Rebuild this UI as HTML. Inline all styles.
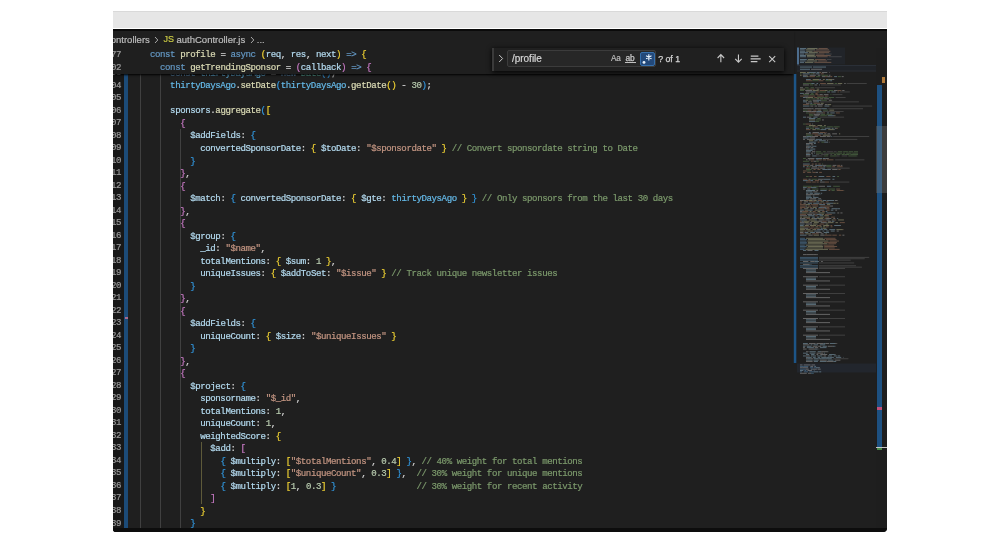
<!DOCTYPE html><html><head><meta charset="utf-8"><style>
*{margin:0;padding:0;box-sizing:border-box}
html,body{width:1000px;height:543px;overflow:hidden;background:#fff}
body{position:relative}
#top{position:absolute;left:113px;top:11px;width:774px;height:17px;background:#e6e6e6;border-top:1px solid #d9d9d9}
#fr{position:absolute;left:113px;top:29px;will-change:transform;width:774px;height:502.5px;background:#1f1f1f;overflow:hidden;border-radius:0 0 4px 3px}
.ln{position:absolute;left:37px;height:12.51px;line-height:12.51px;font-family:"Liberation Mono",monospace;font-size:9.1px;letter-spacing:-0.431px;-webkit-text-stroke:0.2px currentColor;white-space:pre;color:#d4d4d4}
.lnum{position:absolute;margin-top:-0.8px;right:766px;height:12.51px;line-height:12.51px;font-family:"Liberation Mono",monospace;font-size:9.1px;letter-spacing:-0.431px;-webkit-text-stroke:0.2px currentColor;white-space:pre;color:#9a9a9a;text-align:right}
i,b{font-style:normal;font-weight:normal}
.kw{color:#6498c4}.fn{color:#dbdbb5}.var{color:#b4dbf0}.cvar{color:#65bae9}.str{color:#c39582}i.num{color:#b8cbaf}.com{color:#7c9a6c}.op{color:#d4d4d4}.cls{color:#63bfac}
.guide{position:absolute;width:1px;background:#404040}
#bc{position:absolute;left:0;top:0;width:774px;height:19px;font-family:"Liberation Sans",sans-serif;font-size:9.5px;color:#bdbdbd;white-space:pre}
#bc span{position:absolute;top:4.9px;-webkit-text-stroke:0.2px currentColor}
#sticky .lnum{right:673px;margin-top:0.3px}
#sticky{position:absolute;left:0;top:0;width:681px;height:45.2px;background:#1f1f1f;box-shadow:0 2px 2px -1px #000}
#find{position:absolute;left:379.3px;top:18.5px;width:291.6px;height:23.2px;background:#202020;box-shadow:0 1px 5px #000;font-family:"Liberation Sans",sans-serif;color:#cccccc}
#find .sash{position:absolute;left:0;top:0;width:2px;height:100%;background:#3a3a3a}
#find .inp{position:absolute;left:14.8px;top:2.1px;width:148.5px;height:17px;background:#272727;border:1px solid #3c3c3c;border-radius:2px}
#bot{position:absolute;left:0;top:498.6px;width:774px;height:4px;background:#0d0d0d}
#tstrip{position:absolute;left:0;top:0;width:774px;height:2px;background:#0a0a0a}
#sb{position:absolute;left:763px;top:18.5px;width:11px;height:480px}
</style></head><body>
<div id="top"></div>
<div id="fr">
<div style="position:absolute;left:0;top:44px;width:10.5px;height:460px;background:#181818"></div>
<div id="nums"><div class="lnum" style="top:38.94px">103</div>
<div class="lnum" style="top:51.45px">104</div>
<div class="lnum" style="top:63.96px">105</div>
<div class="lnum" style="top:76.47px">106</div>
<div class="lnum" style="top:88.98px">107</div>
<div class="lnum" style="top:101.49px">108</div>
<div class="lnum" style="top:114.00px">109</div>
<div class="lnum" style="top:126.51px">110</div>
<div class="lnum" style="top:139.02px">111</div>
<div class="lnum" style="top:151.53px">112</div>
<div class="lnum" style="top:164.04px">113</div>
<div class="lnum" style="top:176.55px">114</div>
<div class="lnum" style="top:189.06px">115</div>
<div class="lnum" style="top:201.57px">116</div>
<div class="lnum" style="top:214.08px">117</div>
<div class="lnum" style="top:226.59px">118</div>
<div class="lnum" style="top:239.10px">119</div>
<div class="lnum" style="top:251.61px">120</div>
<div class="lnum" style="top:264.12px">121</div>
<div class="lnum" style="top:276.63px">122</div>
<div class="lnum" style="top:289.14px">123</div>
<div class="lnum" style="top:301.65px">124</div>
<div class="lnum" style="top:314.16px">125</div>
<div class="lnum" style="top:326.67px">126</div>
<div class="lnum" style="top:339.18px">127</div>
<div class="lnum" style="top:351.69px">128</div>
<div class="lnum" style="top:364.20px">129</div>
<div class="lnum" style="top:376.71px">130</div>
<div class="lnum" style="top:389.22px">131</div>
<div class="lnum" style="top:401.73px">132</div>
<div class="lnum" style="top:414.24px">133</div>
<div class="lnum" style="top:426.75px">134</div>
<div class="lnum" style="top:439.26px">135</div>
<div class="lnum" style="top:451.77px">136</div>
<div class="lnum" style="top:464.28px">137</div>
<div class="lnum" style="top:476.79px">138</div>
<div class="lnum" style="top:489.30px">139</div>
<div class="lnum" style="top:501.81px">140</div>
</div>
<div class="guide" style="left:27px;top:44px;height:460px"></div>
<div class="guide" style="left:47px;top:44px;height:460px"></div>
<div class="guide" style="left:67.3px;top:99.5px;height:404px"></div>
<div class="guide" style="left:87.5px;top:413px;height:62px;background:#5e5a3a"></div>
<div id="git" style="position:absolute;left:11px;top:44px;width:3.5px;height:460px;background:#1c4b78"></div>
<div style="position:absolute;left:12px;top:287.5px;width:2.5px;height:2px;background:#a86a90"></div>
<div id="code"><div class="ln" style="top:38.94px;opacity:.75">    <i class="kw">const</i> <i class="cvar">thirtyDaysAgo</i> <i class="op">=</i> <i class="kw">new</i> <i class="cls">Date</i><b style="color:#3298e0">(</b><b style="color:#3298e0">)</b><i class="op">;</i></div>
<div class="ln" style="top:51.45px">    <i class="cvar">thirtyDaysAgo</i><i class="op">.</i><i class="fn">setDate</i><b style="color:#3298e0">(</b><i class="cvar">thirtyDaysAgo</i><i class="op">.</i><i class="fn">getDate</i><b style="color:#f2d433">(</b><b style="color:#f2d433">)</b> <i class="op">-</i> <i class="num">30</i><b style="color:#3298e0">)</b><i class="op">;</i></div>
<div class="ln" style="top:63.96px"></div>
<div class="ln" style="top:76.47px">    <i class="var">sponsors</i><i class="op">.</i><i class="fn">aggregate</i><b style="color:#3298e0">(</b><b style="color:#f2d433">[</b></div>
<div class="ln" style="top:88.98px">      <b style="color:#ca7bc7">{</b></div>
<div class="ln" style="top:101.49px">        <i class="var">$addFields</i><i class="op">:</i> <b style="color:#3298e0">{</b></div>
<div class="ln" style="top:114.00px">          <i class="var">convertedSponsorDate</i><i class="op">:</i> <b style="color:#f2d433">{</b> <i class="var">$toDate</i><i class="op">:</i> <i class="str">&quot;$sponsordate&quot;</i> <b style="color:#f2d433">}</b> <i class="com">// Convert sponsordate string to Date</i></div>
<div class="ln" style="top:126.51px">        <b style="color:#3298e0">}</b></div>
<div class="ln" style="top:139.02px">      <b style="color:#ca7bc7">}</b><i class="op">,</i></div>
<div class="ln" style="top:151.53px">      <b style="color:#ca7bc7">{</b></div>
<div class="ln" style="top:164.04px">        <i class="var">$match</i><i class="op">:</i> <b style="color:#3298e0">{</b> <i class="var">convertedSponsorDate</i><i class="op">:</i> <b style="color:#f2d433">{</b> <i class="var">$gte</i><i class="op">:</i> <i class="cvar">thirtyDaysAgo</i> <b style="color:#f2d433">}</b> <b style="color:#3298e0">}</b> <i class="com">// Only sponsors from the last 30 days</i></div>
<div class="ln" style="top:176.55px">      <b style="color:#ca7bc7">}</b><i class="op">,</i></div>
<div class="ln" style="top:189.06px">      <b style="color:#ca7bc7">{</b></div>
<div class="ln" style="top:201.57px">        <i class="var">$group</i><i class="op">:</i> <b style="color:#3298e0">{</b></div>
<div class="ln" style="top:214.08px">          <i class="var">_id</i><i class="op">:</i> <i class="str">&quot;$name&quot;</i><i class="op">,</i></div>
<div class="ln" style="top:226.59px">          <i class="var">totalMentions</i><i class="op">:</i> <b style="color:#f2d433">{</b> <i class="var">$sum</i><i class="op">:</i> <i class="num">1</i> <b style="color:#f2d433">}</b><i class="op">,</i></div>
<div class="ln" style="top:239.10px">          <i class="var">uniqueIssues</i><i class="op">:</i> <b style="color:#f2d433">{</b> <i class="var">$addToSet</i><i class="op">:</i> <i class="str">&quot;$issue&quot;</i> <b style="color:#f2d433">}</b> <i class="com">// Track unique newsletter issues</i></div>
<div class="ln" style="top:251.61px">        <b style="color:#3298e0">}</b></div>
<div class="ln" style="top:264.12px">      <b style="color:#ca7bc7">}</b><i class="op">,</i></div>
<div class="ln" style="top:276.63px">      <b style="color:#ca7bc7">{</b></div>
<div class="ln" style="top:289.14px">        <i class="var">$addFields</i><i class="op">:</i> <b style="color:#3298e0">{</b></div>
<div class="ln" style="top:301.65px">          <i class="var">uniqueCount</i><i class="op">:</i> <b style="color:#f2d433">{</b> <i class="var">$size</i><i class="op">:</i> <i class="str">&quot;$uniqueIssues&quot;</i> <b style="color:#f2d433">}</b></div>
<div class="ln" style="top:314.16px">        <b style="color:#3298e0">}</b></div>
<div class="ln" style="top:326.67px">      <b style="color:#ca7bc7">}</b><i class="op">,</i></div>
<div class="ln" style="top:339.18px">      <b style="color:#ca7bc7">{</b></div>
<div class="ln" style="top:351.69px">        <i class="var">$project</i><i class="op">:</i> <b style="color:#3298e0">{</b></div>
<div class="ln" style="top:364.20px">          <i class="var">sponsorname</i><i class="op">:</i> <i class="str">&quot;$_id&quot;</i><i class="op">,</i></div>
<div class="ln" style="top:376.71px">          <i class="var">totalMentions</i><i class="op">:</i> <i class="num">1</i><i class="op">,</i></div>
<div class="ln" style="top:389.22px">          <i class="var">uniqueCount</i><i class="op">:</i> <i class="num">1</i><i class="op">,</i></div>
<div class="ln" style="top:401.73px">          <i class="var">weightedScore</i><i class="op">:</i> <b style="color:#f2d433">{</b></div>
<div class="ln" style="top:414.24px">            <i class="var">$add</i><i class="op">:</i> <b style="color:#ca7bc7">[</b></div>
<div class="ln" style="top:426.75px">              <b style="color:#3298e0">{</b> <i class="var">$multiply</i><i class="op">:</i> <b style="color:#f2d433">[</b><i class="str">&quot;$totalMentions&quot;</i><i class="op">,</i> <i class="num">0.4</i><b style="color:#f2d433">]</b> <b style="color:#3298e0">}</b><i class="op">,</i> <i class="com">// 40% weight for total mentions</i></div>
<div class="ln" style="top:439.26px">              <b style="color:#3298e0">{</b> <i class="var">$multiply</i><i class="op">:</i> <b style="color:#f2d433">[</b><i class="str">&quot;$uniqueCount&quot;</i><i class="op">,</i> <i class="num">0.3</i><b style="color:#f2d433">]</b> <b style="color:#3298e0">}</b><i class="op">,</i>  <i class="com">// 30% weight for unique mentions</i></div>
<div class="ln" style="top:451.77px">              <b style="color:#3298e0">{</b> <i class="var">$multiply</i><i class="op">:</i> <b style="color:#f2d433">[</b><i class="num">1</i><i class="op">,</i> <i class="num">0.3</i><b style="color:#f2d433">]</b> <b style="color:#3298e0">}</b>                <i class="com">// 30% weight for recent activity</i></div>
<div class="ln" style="top:464.28px">            <b style="color:#ca7bc7">]</b></div>
<div class="ln" style="top:476.79px">          <b style="color:#f2d433">}</b></div>
<div class="ln" style="top:489.30px">        <b style="color:#3298e0">}</b></div>
<div class="ln" style="top:501.81px">      <b style="color:#ca7bc7">}</b><i class="op">,</i></div>
</div>
<svg id="mm" width="90" height="330" style="position:absolute;left:680.0px;top:17.0px"><g><rect x="4.0" y="1.5" width="48" height="17" fill="#212429"/><rect x="4.0" y="19.0" width="81" height="1" fill="#2a2f37"/><rect x="4.0" y="20.0" width="81" height="4.5" fill="#202328"/><rect x="4.0" y="24.5" width="81" height="1" fill="#2a2f37"/><rect x="4.0" y="317.5" width="79" height="9" fill="#22262d"/><rect x="0.8" y="28.0" width="2.5" height="289" fill="#1d5587"/><rect x="4.0" y="1.5" width="2" height="17" fill="#4d6d8d"/></g><g opacity="0.45"><rect x="7.0" y="2.0" width="6.2" height="0.9" fill="#a8d4ee"/><rect x="14.2" y="2.0" width="10.3" height="0.9" fill="#d6d6a0"/><rect x="25.5" y="2.0" width="9.2" height="0.9" fill="#c8906e"/><rect x="7.0" y="3.4" width="4.7" height="0.9" fill="#a8d4ee"/><rect x="12.7" y="3.4" width="9.3" height="0.9" fill="#d6d6a0"/><rect x="23.1" y="3.4" width="13.0" height="0.9" fill="#c8906e"/><rect x="7.0" y="4.8" width="5.2" height="0.9" fill="#a8d4ee"/><rect x="13.2" y="4.8" width="6.3" height="0.9" fill="#d6d6a0"/><rect x="20.5" y="4.8" width="16.9" height="0.9" fill="#c8906e"/><rect x="7.0" y="6.2" width="7.9" height="0.9" fill="#a8d4ee"/><rect x="15.9" y="6.2" width="8.9" height="0.9" fill="#d6d6a0"/><rect x="25.8" y="6.2" width="10.4" height="0.9" fill="#c8906e"/><rect x="7.0" y="7.6" width="4.1" height="0.9" fill="#a8d4ee"/><rect x="12.1" y="7.6" width="10.1" height="0.9" fill="#d6d6a0"/><rect x="23.2" y="7.6" width="8.3" height="0.9" fill="#c8906e"/><rect x="32.5" y="7.6" width="6.2" height="0.9" fill="#707070"/><rect x="7.0" y="9.0" width="5.9" height="0.9" fill="#a8d4ee"/><rect x="13.9" y="9.0" width="7.8" height="0.9" fill="#d6d6a0"/><rect x="22.6" y="9.0" width="15.1" height="0.9" fill="#c8906e"/><rect x="7.0" y="10.3" width="6.0" height="0.9" fill="#a8d4ee"/><rect x="14.0" y="10.3" width="9.0" height="0.9" fill="#d6d6a0"/><rect x="24.0" y="10.3" width="10.7" height="0.9" fill="#c8906e"/><rect x="35.7" y="10.3" width="13.0" height="0.9" fill="#707070"/><rect x="7.0" y="13.1" width="6.8" height="0.9" fill="#a8d4ee"/><rect x="14.8" y="13.1" width="6.1" height="0.9" fill="#d6d6a0"/><rect x="21.9" y="13.1" width="10.9" height="0.9" fill="#c8906e"/><rect x="33.8" y="13.1" width="4.6" height="0.9" fill="#707070"/><rect x="7.0" y="14.5" width="5.6" height="0.9" fill="#a8d4ee"/><rect x="13.6" y="14.5" width="10.5" height="0.9" fill="#d6d6a0"/><rect x="25.1" y="14.5" width="9.0" height="0.9" fill="#c8906e"/><rect x="7.0" y="15.9" width="4.0" height="0.9" fill="#a8d4ee"/><rect x="12.0" y="15.9" width="8.3" height="0.9" fill="#d6d6a0"/><rect x="21.3" y="15.9" width="17.0" height="0.9" fill="#c8906e"/><rect x="7.0" y="26.0" width="5.8" height="0.9" fill="#d6d6a0"/><rect x="14.0" y="26.0" width="2.0" height="0.9" fill="#d6d6a0"/><rect x="16.0" y="26.0" width="6.8" height="0.9" fill="#a8d4ee"/><rect x="23.6" y="26.0" width="2.9" height="0.9" fill="#a8d4ee"/><rect x="26.4" y="26.0" width="1.8" height="0.9" fill="#c8906e"/><rect x="29.0" y="26.0" width="5.3" height="0.9" fill="#c8c8c8"/><rect x="36.3" y="26.0" width="0.5" height="0.9" fill="#c8c8c8"/><rect x="7.0" y="27.4" width="1.5" height="0.9" fill="#70a060"/><rect x="9.7" y="27.4" width="7.0" height="0.9" fill="#a8d4ee"/><rect x="17.5" y="27.4" width="2.5" height="0.9" fill="#70a060"/><rect x="20.0" y="27.4" width="1.7" height="0.9" fill="#c8c8c8"/><rect x="22.6" y="27.4" width="3.9" height="0.9" fill="#a8d4ee"/><rect x="27.7" y="27.4" width="3.1" height="0.9" fill="#c8906e"/><rect x="7.0" y="28.8" width="1.6" height="0.9" fill="#d6d6a0"/><rect x="9.8" y="28.8" width="4.9" height="0.9" fill="#c8c8c8"/><rect x="16.7" y="28.8" width="6.1" height="0.9" fill="#c8c8c8"/><rect x="24.8" y="28.8" width="2.5" height="0.9" fill="#c8c8c8"/><rect x="28.5" y="28.8" width="6.5" height="0.9" fill="#70a060"/><rect x="35.8" y="28.8" width="1.6" height="0.9" fill="#c8c8c8"/><rect x="10.0" y="30.2" width="3.8" height="0.9" fill="#a8d4ee"/><rect x="13.8" y="30.2" width="1.7" height="0.9" fill="#d6d6a0"/><rect x="16.3" y="30.2" width="5.6" height="0.9" fill="#c8906e"/><rect x="23.1" y="30.2" width="3.8" height="0.9" fill="#70a060"/><rect x="28.9" y="30.2" width="3.1" height="0.9" fill="#c8c8c8"/><rect x="32.0" y="30.2" width="2.2" height="0.9" fill="#c8906e"/><rect x="34.2" y="30.2" width="3.0" height="0.9" fill="#c8c8c8"/><rect x="37.3" y="30.2" width="1.9" height="0.9" fill="#c8906e"/><rect x="41.1" y="30.2" width="2.9" height="0.9" fill="#a8d4ee"/><rect x="44.8" y="30.2" width="3.1" height="0.9" fill="#70a060"/><rect x="48.7" y="30.2" width="2.0" height="0.9" fill="#c8c8c8"/><rect x="13.0" y="33.0" width="4.7" height="0.9" fill="#a8d4ee"/><rect x="19.7" y="33.0" width="6.5" height="0.9" fill="#d6d6a0"/><rect x="26.3" y="33.0" width="1.6" height="0.9" fill="#a8d4ee"/><rect x="29.9" y="33.0" width="1.9" height="0.9" fill="#d6d6a0"/><rect x="32.9" y="33.0" width="2.3" height="0.9" fill="#a8d4ee"/><rect x="35.2" y="33.0" width="4.0" height="0.9" fill="#d6d6a0"/><rect x="39.2" y="33.0" width="2.1" height="0.9" fill="#c8c8c8"/><rect x="13.0" y="34.3" width="6.3" height="0.9" fill="#c8906e"/><rect x="19.3" y="34.3" width="6.2" height="0.9" fill="#70a060"/><rect x="25.5" y="34.3" width="4.9" height="0.9" fill="#c8906e"/><rect x="32.5" y="34.3" width="4.7" height="0.9" fill="#70a060"/><rect x="37.2" y="34.3" width="1.9" height="0.9" fill="#a8d4ee"/><rect x="10.0" y="37.1" width="3.9" height="0.9" fill="#70a060"/><rect x="13.9" y="37.1" width="4.4" height="0.9" fill="#70a060"/><rect x="18.3" y="37.1" width="3.2" height="0.9" fill="#a8d4ee"/><rect x="23.5" y="37.1" width="1.6" height="0.9" fill="#a8d4ee"/><rect x="27.1" y="37.1" width="5.8" height="0.9" fill="#c8906e"/><rect x="34.1" y="37.1" width="6.4" height="0.9" fill="#d6d6a0"/><rect x="41.7" y="37.1" width="2.3" height="0.9" fill="#70a060"/><rect x="44.8" y="37.1" width="4.4" height="0.9" fill="#d6d6a0"/><rect x="51.2" y="37.1" width="1.5" height="0.9" fill="#c8c8c8"/><rect x="53.7" y="37.1" width="20.0" height="0.9" fill="#707070"/><rect x="10.0" y="38.5" width="5.9" height="0.9" fill="#c8c8c8"/><rect x="16.7" y="38.5" width="3.6" height="0.9" fill="#70a060"/><rect x="21.5" y="38.5" width="2.7" height="0.9" fill="#c8c8c8"/><rect x="26.2" y="38.5" width="0.8" height="0.9" fill="#a8d4ee"/><rect x="27.9" y="38.5" width="20.0" height="0.9" fill="#707070"/><rect x="7.0" y="41.3" width="3.0" height="0.9" fill="#c8c8c8"/><rect x="12.0" y="41.3" width="3.6" height="0.9" fill="#70a060"/><rect x="17.6" y="41.3" width="3.3" height="0.9" fill="#70a060"/><rect x="21.9" y="41.3" width="20.0" height="0.9" fill="#707070"/><rect x="7.0" y="42.7" width="5.2" height="0.9" fill="#d6d6a0"/><rect x="13.4" y="42.7" width="3.2" height="0.9" fill="#70a060"/><rect x="16.6" y="42.7" width="5.0" height="0.9" fill="#c8906e"/><rect x="23.7" y="42.7" width="2.5" height="0.9" fill="#d6d6a0"/><rect x="7.0" y="44.1" width="4.0" height="0.9" fill="#70a060"/><rect x="12.2" y="44.1" width="6.8" height="0.9" fill="#c8c8c8"/><rect x="19.7" y="44.1" width="6.0" height="0.9" fill="#d6d6a0"/><rect x="26.6" y="44.1" width="5.4" height="0.9" fill="#c8906e"/><rect x="32.0" y="44.1" width="2.5" height="0.9" fill="#d6d6a0"/><rect x="35.7" y="44.1" width="4.5" height="0.9" fill="#70a060"/><rect x="40.9" y="44.1" width="3.7" height="0.9" fill="#c8c8c8"/><rect x="44.6" y="44.1" width="3.8" height="0.9" fill="#c8906e"/><rect x="49.2" y="44.1" width="2.3" height="0.9" fill="#c8c8c8"/><rect x="13.0" y="45.5" width="4.1" height="0.9" fill="#c8c8c8"/><rect x="17.1" y="45.5" width="5.5" height="0.9" fill="#a8d4ee"/><rect x="23.3" y="45.5" width="2.8" height="0.9" fill="#c8906e"/><rect x="26.2" y="45.5" width="6.9" height="0.9" fill="#70a060"/><rect x="34.2" y="45.5" width="2.9" height="0.9" fill="#a8d4ee"/><rect x="38.4" y="45.5" width="4.3" height="0.9" fill="#a8d4ee"/><rect x="44.6" y="45.5" width="1.2" height="0.9" fill="#c8906e"/><rect x="46.8" y="45.5" width="10.0" height="0.9" fill="#707070"/><rect x="7.0" y="46.9" width="3.9" height="0.9" fill="#a8d4ee"/><rect x="11.7" y="46.9" width="4.4" height="0.9" fill="#c8c8c8"/><rect x="18.1" y="46.9" width="2.3" height="0.9" fill="#70a060"/><rect x="22.4" y="46.9" width="2.2" height="0.9" fill="#c8906e"/><rect x="10.0" y="48.2" width="6.1" height="0.9" fill="#70a060"/><rect x="16.9" y="48.2" width="4.4" height="0.9" fill="#70a060"/><rect x="22.4" y="48.2" width="3.2" height="0.9" fill="#c8906e"/><rect x="26.5" y="48.2" width="3.2" height="0.9" fill="#c8c8c8"/><rect x="30.8" y="48.2" width="4.7" height="0.9" fill="#c8c8c8"/><rect x="37.5" y="48.2" width="0.9" height="0.9" fill="#70a060"/><rect x="39.4" y="48.2" width="10.0" height="0.9" fill="#707070"/><rect x="7.0" y="49.6" width="4.3" height="0.9" fill="#c8906e"/><rect x="11.3" y="49.6" width="4.2" height="0.9" fill="#c8c8c8"/><rect x="15.5" y="49.6" width="6.6" height="0.9" fill="#c8906e"/><rect x="24.2" y="49.6" width="6.6" height="0.9" fill="#c8906e"/><rect x="31.9" y="49.6" width="2.9" height="0.9" fill="#c8906e"/><rect x="35.6" y="49.6" width="0.3" height="0.9" fill="#c8906e"/><rect x="10.0" y="51.0" width="2.2" height="0.9" fill="#a8d4ee"/><rect x="12.2" y="51.0" width="2.6" height="0.9" fill="#c8c8c8"/><rect x="14.8" y="51.0" width="5.3" height="0.9" fill="#d6d6a0"/><rect x="21.3" y="51.0" width="2.8" height="0.9" fill="#c8906e"/><rect x="24.1" y="51.0" width="4.2" height="0.9" fill="#70a060"/><rect x="28.4" y="51.0" width="6.2" height="0.9" fill="#70a060"/><rect x="35.7" y="51.0" width="5.4" height="0.9" fill="#70a060"/><rect x="42.6" y="51.0" width="10.0" height="0.9" fill="#707070"/><rect x="13.0" y="52.4" width="4.5" height="0.9" fill="#70a060"/><rect x="18.3" y="52.4" width="4.4" height="0.9" fill="#70a060"/><rect x="23.5" y="52.4" width="2.8" height="0.9" fill="#d6d6a0"/><rect x="27.1" y="52.4" width="3.2" height="0.9" fill="#d6d6a0"/><rect x="31.1" y="52.4" width="2.7" height="0.9" fill="#c8c8c8"/><rect x="33.8" y="52.4" width="2.2" height="0.9" fill="#c8c8c8"/><rect x="36.8" y="52.4" width="0.6" height="0.9" fill="#d6d6a0"/><rect x="10.0" y="53.8" width="2.6" height="0.9" fill="#a8d4ee"/><rect x="12.6" y="53.8" width="2.6" height="0.9" fill="#d6d6a0"/><rect x="16.4" y="53.8" width="2.1" height="0.9" fill="#70a060"/><rect x="19.7" y="53.8" width="4.3" height="0.9" fill="#c8c8c8"/><rect x="24.0" y="53.8" width="4.2" height="0.9" fill="#a8d4ee"/><rect x="28.2" y="53.8" width="5.7" height="0.9" fill="#70a060"/><rect x="35.9" y="53.8" width="2.3" height="0.9" fill="#c8c8c8"/><rect x="38.2" y="53.8" width="0.9" height="0.9" fill="#c8c8c8"/><rect x="7.0" y="20.6" width="12.0" height="0.9" fill="#a8d4ee"/><rect x="20.0" y="20.6" width="13.0" height="0.9" fill="#a8d4ee"/><rect x="7.0" y="22.8" width="10.0" height="0.9" fill="#a8d4ee"/><rect x="18.0" y="22.8" width="11.0" height="0.9" fill="#c8c8c8"/><rect x="10.0" y="55.4" width="4.0" height="0.9" fill="#a8d4ee"/><rect x="15.2" y="55.4" width="3.6" height="0.9" fill="#c8c8c8"/><rect x="20.1" y="55.4" width="3.9" height="0.9" fill="#c8c8c8"/><rect x="24.0" y="55.4" width="2.0" height="0.9" fill="#a8d4ee"/><rect x="26.9" y="55.4" width="39.0" height="0.9" fill="#707070"/><rect x="13.0" y="56.8" width="3.5" height="0.9" fill="#c8c8c8"/><rect x="17.3" y="56.8" width="2.0" height="0.9" fill="#a8d4ee"/><rect x="20.6" y="56.8" width="6.4" height="0.9" fill="#c8906e"/><rect x="27.8" y="56.8" width="2.9" height="0.9" fill="#d6d6a0"/><rect x="10.0" y="58.2" width="5.8" height="0.9" fill="#c8906e"/><rect x="16.6" y="58.2" width="6.4" height="0.9" fill="#70a060"/><rect x="24.2" y="58.2" width="5.7" height="0.9" fill="#c8c8c8"/><rect x="31.9" y="58.2" width="2.6" height="0.9" fill="#c8c8c8"/><rect x="34.6" y="58.2" width="3.5" height="0.9" fill="#d6d6a0"/><rect x="10.0" y="59.6" width="6.5" height="0.9" fill="#a8d4ee"/><rect x="17.3" y="59.6" width="3.0" height="0.9" fill="#c8c8c8"/><rect x="21.5" y="59.6" width="2.7" height="0.9" fill="#c8c8c8"/><rect x="25.0" y="59.6" width="4.4" height="0.9" fill="#c8c8c8"/><rect x="31.4" y="59.6" width="5.0" height="0.9" fill="#a8d4ee"/><rect x="39.3" y="59.6" width="39.8" height="0.9" fill="#707070"/><rect x="10.0" y="62.3" width="2.9" height="0.9" fill="#c8c8c8"/><rect x="12.9" y="62.3" width="5.7" height="0.9" fill="#c8c8c8"/><rect x="18.6" y="62.3" width="2.0" height="0.9" fill="#c8c8c8"/><rect x="21.8" y="62.3" width="6.5" height="0.9" fill="#c8c8c8"/><rect x="28.3" y="62.3" width="5.0" height="0.9" fill="#a8d4ee"/><rect x="33.3" y="62.3" width="0.9" height="0.9" fill="#a8d4ee"/><rect x="35.2" y="62.3" width="34.8" height="0.9" fill="#707070"/><rect x="10.0" y="63.7" width="4.5" height="0.9" fill="#70a060"/><rect x="14.5" y="63.7" width="3.9" height="0.9" fill="#c8906e"/><rect x="20.3" y="63.7" width="3.1" height="0.9" fill="#c8906e"/><rect x="24.6" y="63.7" width="3.5" height="0.9" fill="#d6d6a0"/><rect x="30.1" y="63.7" width="5.1" height="0.9" fill="#70a060"/><rect x="36.4" y="63.7" width="4.7" height="0.9" fill="#d6d6a0"/><rect x="10.0" y="65.1" width="2.4" height="0.9" fill="#c8c8c8"/><rect x="12.4" y="65.1" width="6.4" height="0.9" fill="#c8c8c8"/><rect x="18.8" y="65.1" width="4.7" height="0.9" fill="#c8c8c8"/><rect x="23.5" y="65.1" width="5.2" height="0.9" fill="#a8d4ee"/><rect x="29.7" y="65.1" width="20.9" height="0.9" fill="#707070"/><rect x="13.0" y="66.5" width="2.8" height="0.9" fill="#70a060"/><rect x="15.8" y="66.5" width="6.7" height="0.9" fill="#c8906e"/><rect x="23.3" y="66.5" width="6.9" height="0.9" fill="#c8c8c8"/><rect x="30.2" y="66.5" width="1.8" height="0.9" fill="#c8906e"/><rect x="34.0" y="66.5" width="2.1" height="0.9" fill="#a8d4ee"/><rect x="37.3" y="66.5" width="4.4" height="0.9" fill="#a8d4ee"/><rect x="42.9" y="66.5" width="3.9" height="0.9" fill="#c8906e"/><rect x="16.0" y="67.9" width="3.8" height="0.9" fill="#70a060"/><rect x="20.6" y="67.9" width="6.7" height="0.9" fill="#c8c8c8"/><rect x="28.1" y="67.9" width="4.1" height="0.9" fill="#70a060"/><rect x="33.5" y="67.9" width="5.8" height="0.9" fill="#70a060"/><rect x="16.0" y="69.3" width="4.6" height="0.9" fill="#70a060"/><rect x="21.4" y="69.3" width="5.0" height="0.9" fill="#c8c8c8"/><rect x="27.2" y="69.3" width="6.7" height="0.9" fill="#70a060"/><rect x="34.7" y="69.3" width="6.3" height="0.9" fill="#a8d4ee"/><rect x="41.1" y="69.3" width="1.4" height="0.9" fill="#d6d6a0"/><rect x="10.0" y="70.7" width="3.0" height="0.9" fill="#a8d4ee"/><rect x="13.8" y="70.7" width="4.5" height="0.9" fill="#c8c8c8"/><rect x="20.4" y="70.7" width="4.1" height="0.9" fill="#a8d4ee"/><rect x="26.6" y="70.7" width="24.5" height="0.9" fill="#707070"/><rect x="16.0" y="72.1" width="6.3" height="0.9" fill="#a8d4ee"/><rect x="24.3" y="72.1" width="3.3" height="0.9" fill="#70a060"/><rect x="16.0" y="73.5" width="6.0" height="0.9" fill="#d6d6a0"/><rect x="22.8" y="73.5" width="5.1" height="0.9" fill="#70a060"/><rect x="29.0" y="73.5" width="1.9" height="0.9" fill="#c8c8c8"/><rect x="16.0" y="74.9" width="6.3" height="0.9" fill="#a8d4ee"/><rect x="22.3" y="74.9" width="3.9" height="0.9" fill="#70a060"/><rect x="10.0" y="77.6" width="2.7" height="0.9" fill="#70a060"/><rect x="12.7" y="77.6" width="5.3" height="0.9" fill="#c8906e"/><rect x="19.2" y="77.6" width="0.9" height="0.9" fill="#c8c8c8"/><rect x="16.0" y="79.0" width="6.5" height="0.9" fill="#d6d6a0"/><rect x="24.5" y="79.0" width="4.6" height="0.9" fill="#d6d6a0"/><rect x="31.1" y="79.0" width="1.7" height="0.9" fill="#d6d6a0"/><rect x="13.0" y="80.4" width="5.5" height="0.9" fill="#70a060"/><rect x="19.3" y="80.4" width="2.0" height="0.9" fill="#d6d6a0"/><rect x="21.3" y="80.4" width="3.5" height="0.9" fill="#c8906e"/><rect x="26.8" y="80.4" width="5.9" height="0.9" fill="#70a060"/><rect x="33.9" y="80.4" width="5.9" height="0.9" fill="#70a060"/><rect x="40.5" y="80.4" width="6.1" height="0.9" fill="#70a060"/><rect x="13.0" y="81.8" width="3.0" height="0.9" fill="#a8d4ee"/><rect x="16.8" y="81.8" width="4.3" height="0.9" fill="#70a060"/><rect x="22.0" y="81.8" width="4.6" height="0.9" fill="#a8d4ee"/><rect x="28.6" y="81.8" width="1.9" height="0.9" fill="#70a060"/><rect x="31.7" y="81.8" width="5.8" height="0.9" fill="#a8d4ee"/><rect x="38.7" y="81.8" width="1.9" height="0.9" fill="#a8d4ee"/><rect x="41.8" y="81.8" width="2.0" height="0.9" fill="#c8c8c8"/><rect x="43.8" y="81.8" width="1.0" height="0.9" fill="#c8906e"/><rect x="13.0" y="83.2" width="4.4" height="0.9" fill="#c8906e"/><rect x="19.4" y="83.2" width="3.4" height="0.9" fill="#d6d6a0"/><rect x="23.6" y="83.2" width="4.2" height="0.9" fill="#70a060"/><rect x="27.8" y="83.2" width="5.4" height="0.9" fill="#a8d4ee"/><rect x="35.2" y="83.2" width="5.7" height="0.9" fill="#d6d6a0"/><rect x="40.9" y="83.2" width="0.8" height="0.9" fill="#a8d4ee"/><rect x="16.0" y="86.0" width="1.6" height="0.9" fill="#a8d4ee"/><rect x="19.6" y="86.0" width="6.6" height="0.9" fill="#c8c8c8"/><rect x="26.9" y="86.0" width="5.6" height="0.9" fill="#c8906e"/><rect x="33.3" y="86.0" width="0.5" height="0.9" fill="#c8906e"/><rect x="13.0" y="87.4" width="1.8" height="0.9" fill="#d6d6a0"/><rect x="14.8" y="87.4" width="3.2" height="0.9" fill="#c8c8c8"/><rect x="18.8" y="87.4" width="6.5" height="0.9" fill="#c8906e"/><rect x="25.3" y="87.4" width="4.7" height="0.9" fill="#a8d4ee"/><rect x="31.2" y="87.4" width="2.1" height="0.9" fill="#c8c8c8"/><rect x="34.5" y="87.4" width="2.7" height="0.9" fill="#c8c8c8"/><rect x="39.2" y="87.4" width="4.8" height="0.9" fill="#c8c8c8"/><rect x="46.0" y="87.4" width="1.2" height="0.9" fill="#d6d6a0"/><rect x="13.0" y="88.7" width="6.7" height="0.9" fill="#70a060"/><rect x="21.7" y="88.7" width="6.2" height="0.9" fill="#c8906e"/><rect x="29.9" y="88.7" width="6.5" height="0.9" fill="#d6d6a0"/><rect x="36.4" y="88.7" width="1.5" height="0.9" fill="#c8c8c8"/><rect x="10.0" y="90.1" width="3.6" height="0.9" fill="#c8c8c8"/><rect x="13.6" y="90.1" width="5.1" height="0.9" fill="#a8d4ee"/><rect x="18.7" y="90.1" width="6.3" height="0.9" fill="#c8c8c8"/><rect x="27.0" y="90.1" width="5.9" height="0.9" fill="#c8c8c8"/><rect x="33.7" y="90.1" width="3.8" height="0.9" fill="#c8c8c8"/><rect x="38.3" y="90.1" width="0.9" height="0.9" fill="#a8d4ee"/><rect x="40.2" y="90.1" width="36.0" height="0.9" fill="#707070"/><rect x="10.0" y="91.5" width="5.7" height="0.9" fill="#a8d4ee"/><rect x="16.5" y="91.5" width="5.5" height="0.9" fill="#c8c8c8"/><rect x="10.0" y="92.9" width="2.0" height="0.9" fill="#c8c8c8"/><rect x="14.0" y="92.9" width="2.0" height="0.9" fill="#c8c8c8"/><rect x="16.0" y="92.9" width="5.8" height="0.9" fill="#c8c8c8"/><rect x="22.6" y="92.9" width="6.4" height="0.9" fill="#a8d4ee"/><rect x="30.0" y="92.9" width="34.3" height="0.9" fill="#707070"/><rect x="16.0" y="94.3" width="4.2" height="0.9" fill="#d6d6a0"/><rect x="21.4" y="94.3" width="3.2" height="0.9" fill="#a8d4ee"/><rect x="25.8" y="94.3" width="7.0" height="0.9" fill="#a8d4ee"/><rect x="34.0" y="94.3" width="1.1" height="0.9" fill="#c8c8c8"/><rect x="16.0" y="95.7" width="6.8" height="0.9" fill="#a8d4ee"/><rect x="24.8" y="95.7" width="1.6" height="0.9" fill="#c8906e"/><rect x="28.4" y="95.7" width="2.8" height="0.9" fill="#70a060"/><rect x="31.2" y="95.7" width="4.0" height="0.9" fill="#a8d4ee"/><rect x="36.0" y="95.7" width="0.5" height="0.9" fill="#c8c8c8"/><rect x="13.0" y="97.0" width="6.7" height="0.9" fill="#c8c8c8"/><rect x="20.9" y="97.0" width="1.9" height="0.9" fill="#a8d4ee"/><rect x="13.0" y="98.4" width="3.6" height="0.9" fill="#a8d4ee"/><rect x="17.8" y="98.4" width="2.4" height="0.9" fill="#c8c8c8"/><rect x="13.0" y="99.8" width="3.3" height="0.9" fill="#c8c8c8"/><rect x="16.3" y="99.8" width="2.1" height="0.9" fill="#a8d4ee"/><rect x="19.2" y="99.8" width="4.2" height="0.9" fill="#a8d4ee"/><rect x="13.0" y="101.2" width="1.7" height="0.9" fill="#c8c8c8"/><rect x="14.7" y="101.2" width="2.1" height="0.9" fill="#a8d4ee"/><rect x="17.6" y="101.2" width="2.6" height="0.9" fill="#c8c8c8"/><rect x="13.0" y="102.6" width="3.4" height="0.9" fill="#c8c8c8"/><rect x="17.2" y="102.6" width="5.1" height="0.9" fill="#a8d4ee"/><rect x="13.0" y="103.9" width="6.6" height="0.9" fill="#a8d4ee"/><rect x="21.6" y="103.9" width="0.3" height="0.9" fill="#c8c8c8"/><rect x="13.0" y="105.3" width="4.8" height="0.9" fill="#a8d4ee"/><rect x="19.0" y="105.3" width="3.3" height="0.9" fill="#c8c8c8"/><rect x="23.0" y="105.3" width="5.1" height="0.9" fill="#70a060"/><rect x="30.1" y="105.3" width="2.6" height="0.9" fill="#70a060"/><rect x="33.9" y="105.3" width="6.0" height="0.9" fill="#707070"/><rect x="40.7" y="105.3" width="2.9" height="0.9" fill="#707070"/><rect x="44.8" y="105.3" width="4.5" height="0.9" fill="#70a060"/><rect x="50.2" y="105.3" width="4.7" height="0.9" fill="#70a060"/><rect x="55.6" y="105.3" width="4.6" height="0.9" fill="#70a060"/><rect x="61.0" y="105.3" width="4.0" height="0.9" fill="#70a060"/><rect x="13.0" y="106.7" width="3.8" height="0.9" fill="#c8c8c8"/><rect x="18.0" y="106.7" width="2.0" height="0.9" fill="#c8c8c8"/><rect x="21.2" y="106.7" width="0.7" height="0.9" fill="#a8d4ee"/><rect x="23.0" y="106.7" width="6.9" height="0.9" fill="#70a060"/><rect x="30.7" y="106.7" width="6.5" height="0.9" fill="#707070"/><rect x="37.1" y="106.7" width="4.6" height="0.9" fill="#70a060"/><rect x="42.5" y="106.7" width="6.5" height="0.9" fill="#70a060"/><rect x="49.8" y="106.7" width="2.2" height="0.9" fill="#70a060"/><rect x="53.2" y="106.7" width="5.3" height="0.9" fill="#70a060"/><rect x="59.3" y="106.7" width="5.7" height="0.9" fill="#70a060"/><rect x="13.0" y="108.1" width="4.5" height="0.9" fill="#a8d4ee"/><rect x="19.5" y="108.1" width="0.6" height="0.9" fill="#a8d4ee"/><rect x="23.0" y="108.1" width="3.2" height="0.9" fill="#707070"/><rect x="28.2" y="108.1" width="4.9" height="0.9" fill="#707070"/><rect x="33.1" y="108.1" width="2.4" height="0.9" fill="#70a060"/><rect x="37.4" y="108.1" width="1.7" height="0.9" fill="#707070"/><rect x="41.1" y="108.1" width="2.2" height="0.9" fill="#70a060"/><rect x="44.1" y="108.1" width="3.3" height="0.9" fill="#70a060"/><rect x="48.6" y="108.1" width="2.8" height="0.9" fill="#70a060"/><rect x="51.5" y="108.1" width="5.0" height="0.9" fill="#70a060"/><rect x="57.3" y="108.1" width="3.7" height="0.9" fill="#70a060"/><rect x="61.0" y="108.1" width="4.0" height="0.9" fill="#70a060"/><rect x="13.0" y="109.5" width="4.2" height="0.9" fill="#c8c8c8"/><rect x="19.2" y="109.5" width="4.3" height="0.9" fill="#a8d4ee"/><rect x="23.0" y="109.5" width="6.5" height="0.9" fill="#707070"/><rect x="30.7" y="109.5" width="4.4" height="0.9" fill="#70a060"/><rect x="37.1" y="109.5" width="6.5" height="0.9" fill="#70a060"/><rect x="43.5" y="109.5" width="3.1" height="0.9" fill="#707070"/><rect x="48.7" y="109.5" width="5.5" height="0.9" fill="#707070"/><rect x="55.4" y="109.5" width="5.6" height="0.9" fill="#70a060"/><rect x="61.0" y="109.5" width="2.8" height="0.9" fill="#70a060"/><rect x="64.7" y="109.5" width="0.3" height="0.9" fill="#70a060"/><rect x="10.0" y="112.0" width="2.8" height="0.9" fill="#70a060"/><rect x="14.8" y="112.0" width="6.7" height="0.9" fill="#c8c8c8"/><rect x="22.7" y="112.0" width="6.3" height="0.9" fill="#a8d4ee"/><rect x="29.8" y="112.0" width="2.7" height="0.9" fill="#a8d4ee"/><rect x="32.5" y="112.0" width="3.3" height="0.9" fill="#c8c8c8"/><rect x="13.0" y="113.4" width="1.5" height="0.9" fill="#c8c8c8"/><rect x="15.7" y="113.4" width="1.6" height="0.9" fill="#c8c8c8"/><rect x="17.3" y="113.4" width="3.9" height="0.9" fill="#c8906e"/><rect x="23.3" y="113.4" width="2.3" height="0.9" fill="#c8c8c8"/><rect x="25.5" y="113.4" width="3.2" height="0.9" fill="#c8906e"/><rect x="29.9" y="113.4" width="3.2" height="0.9" fill="#c8906e"/><rect x="33.9" y="113.4" width="6.6" height="0.9" fill="#c8906e"/><rect x="42.1" y="113.4" width="29.3" height="0.9" fill="#707070"/><rect x="10.0" y="114.8" width="6.1" height="0.9" fill="#70a060"/><rect x="18.1" y="114.8" width="1.6" height="0.9" fill="#c8906e"/><rect x="20.5" y="114.8" width="2.6" height="0.9" fill="#c8c8c8"/><rect x="23.1" y="114.8" width="2.8" height="0.9" fill="#70a060"/><rect x="10.0" y="117.6" width="6.8" height="0.9" fill="#a8d4ee"/><rect x="18.8" y="117.6" width="1.9" height="0.9" fill="#c8906e"/><rect x="21.9" y="117.6" width="2.2" height="0.9" fill="#c8906e"/><rect x="25.3" y="117.6" width="2.5" height="0.9" fill="#c8906e"/><rect x="29.0" y="117.6" width="1.1" height="0.9" fill="#70a060"/><rect x="10.0" y="118.9" width="6.4" height="0.9" fill="#c8906e"/><rect x="17.2" y="118.9" width="3.0" height="0.9" fill="#c8c8c8"/><rect x="22.2" y="118.9" width="6.9" height="0.9" fill="#a8d4ee"/><rect x="29.2" y="118.9" width="4.4" height="0.9" fill="#c8c8c8"/><rect x="33.6" y="118.9" width="4.8" height="0.9" fill="#70a060"/><rect x="39.6" y="118.9" width="3.8" height="0.9" fill="#c8c8c8"/><rect x="44.2" y="118.9" width="3.1" height="0.9" fill="#c8906e"/><rect x="48.1" y="118.9" width="1.2" height="0.9" fill="#c8c8c8"/><rect x="10.0" y="120.3" width="1.7" height="0.9" fill="#a8d4ee"/><rect x="13.7" y="120.3" width="1.5" height="0.9" fill="#a8d4ee"/><rect x="15.2" y="120.3" width="2.5" height="0.9" fill="#70a060"/><rect x="18.9" y="120.3" width="5.1" height="0.9" fill="#c8c8c8"/><rect x="25.2" y="120.3" width="4.3" height="0.9" fill="#c8906e"/><rect x="30.3" y="120.3" width="2.1" height="0.9" fill="#a8d4ee"/><rect x="33.2" y="120.3" width="5.2" height="0.9" fill="#70a060"/><rect x="39.2" y="120.3" width="2.9" height="0.9" fill="#c8906e"/><rect x="44.1" y="120.3" width="2.9" height="0.9" fill="#c8906e"/><rect x="47.0" y="120.3" width="2.6" height="0.9" fill="#c8906e"/><rect x="13.0" y="121.7" width="3.9" height="0.9" fill="#c8906e"/><rect x="18.1" y="121.7" width="6.2" height="0.9" fill="#c8c8c8"/><rect x="24.3" y="121.7" width="2.1" height="0.9" fill="#c8c8c8"/><rect x="27.2" y="121.7" width="4.9" height="0.9" fill="#c8c8c8"/><rect x="34.3" y="121.7" width="22.4" height="0.9" fill="#707070"/><rect x="13.0" y="123.1" width="5.6" height="0.9" fill="#70a060"/><rect x="20.6" y="123.1" width="2.0" height="0.9" fill="#c8906e"/><rect x="24.5" y="123.1" width="2.9" height="0.9" fill="#c8906e"/><rect x="29.4" y="123.1" width="5.3" height="0.9" fill="#a8d4ee"/><rect x="34.7" y="123.1" width="3.2" height="0.9" fill="#a8d4ee"/><rect x="39.2" y="123.1" width="5.3" height="0.9" fill="#c8c8c8"/><rect x="45.3" y="123.1" width="2.3" height="0.9" fill="#c8906e"/><rect x="10.0" y="124.5" width="3.8" height="0.9" fill="#c8906e"/><rect x="13.8" y="124.5" width="3.7" height="0.9" fill="#70a060"/><rect x="19.4" y="124.5" width="0.7" height="0.9" fill="#c8c8c8"/><rect x="10.0" y="125.9" width="2.2" height="0.9" fill="#c8906e"/><rect x="14.2" y="125.9" width="4.0" height="0.9" fill="#c8906e"/><rect x="19.4" y="125.9" width="3.2" height="0.9" fill="#c8906e"/><rect x="22.6" y="125.9" width="2.4" height="0.9" fill="#c8c8c8"/><rect x="26.2" y="125.9" width="2.7" height="0.9" fill="#c8906e"/><rect x="13.0" y="130.1" width="2.7" height="0.9" fill="#70a060"/><rect x="16.5" y="130.1" width="2.5" height="0.9" fill="#c8906e"/><rect x="21.0" y="130.1" width="2.6" height="0.9" fill="#c8906e"/><rect x="25.6" y="130.1" width="5.7" height="0.9" fill="#a8d4ee"/><rect x="33.3" y="130.1" width="4.2" height="0.9" fill="#c8906e"/><rect x="39.5" y="130.1" width="2.6" height="0.9" fill="#a8d4ee"/><rect x="44.1" y="130.1" width="1.9" height="0.9" fill="#70a060"/><rect x="10.0" y="132.8" width="4.3" height="0.9" fill="#c8906e"/><rect x="15.5" y="132.8" width="2.1" height="0.9" fill="#c8c8c8"/><rect x="18.4" y="132.8" width="5.5" height="0.9" fill="#70a060"/><rect x="24.7" y="132.8" width="5.7" height="0.9" fill="#c8c8c8"/><rect x="30.4" y="132.8" width="7.0" height="0.9" fill="#a8d4ee"/><rect x="39.4" y="132.8" width="2.0" height="0.9" fill="#a8d4ee"/><rect x="10.0" y="134.2" width="4.8" height="0.9" fill="#a8d4ee"/><rect x="14.8" y="134.2" width="2.5" height="0.9" fill="#c8906e"/><rect x="17.4" y="134.2" width="2.6" height="0.9" fill="#a8d4ee"/><rect x="22.0" y="134.2" width="4.1" height="0.9" fill="#c8906e"/><rect x="27.4" y="134.2" width="1.7" height="0.9" fill="#a8d4ee"/><rect x="13.0" y="135.6" width="5.4" height="0.9" fill="#c8906e"/><rect x="19.2" y="135.6" width="3.6" height="0.9" fill="#c8906e"/><rect x="23.6" y="135.6" width="2.1" height="0.9" fill="#c8906e"/><rect x="26.9" y="135.6" width="4.9" height="0.9" fill="#c8c8c8"/><rect x="31.8" y="135.6" width="4.3" height="0.9" fill="#c8906e"/><rect x="37.1" y="135.6" width="19.2" height="0.9" fill="#707070"/><rect x="10.0" y="139.8" width="2.7" height="0.9" fill="#70a060"/><rect x="12.7" y="139.8" width="6.8" height="0.9" fill="#70a060"/><rect x="20.2" y="139.8" width="5.8" height="0.9" fill="#70a060"/><rect x="26.1" y="139.8" width="5.9" height="0.9" fill="#c8c8c8"/><rect x="33.9" y="139.8" width="4.2" height="0.9" fill="#a8d4ee"/><rect x="40.2" y="139.8" width="6.6" height="0.9" fill="#70a060"/><rect x="10.0" y="141.2" width="3.7" height="0.9" fill="#a8d4ee"/><rect x="14.5" y="141.2" width="3.4" height="0.9" fill="#c8906e"/><rect x="17.9" y="141.2" width="5.6" height="0.9" fill="#a8d4ee"/><rect x="24.3" y="141.2" width="0.4" height="0.9" fill="#70a060"/><rect x="10.0" y="142.6" width="2.2" height="0.9" fill="#c8c8c8"/><rect x="14.2" y="142.6" width="3.0" height="0.9" fill="#a8d4ee"/><rect x="19.2" y="142.6" width="6.2" height="0.9" fill="#70a060"/><rect x="27.3" y="142.6" width="5.5" height="0.9" fill="#70a060"/><rect x="32.8" y="142.6" width="1.6" height="0.9" fill="#70a060"/><rect x="35.6" y="142.6" width="6.4" height="0.9" fill="#70a060"/><rect x="43.2" y="142.6" width="3.9" height="0.9" fill="#c8906e"/><rect x="13.0" y="144.0" width="3.5" height="0.9" fill="#c8906e"/><rect x="16.5" y="144.0" width="5.0" height="0.9" fill="#a8d4ee"/><rect x="23.4" y="144.0" width="1.8" height="0.9" fill="#c8c8c8"/><rect x="27.3" y="144.0" width="6.3" height="0.9" fill="#a8d4ee"/><rect x="35.6" y="144.0" width="1.7" height="0.9" fill="#c8906e"/><rect x="38.5" y="144.0" width="3.2" height="0.9" fill="#70a060"/><rect x="43.7" y="144.0" width="6.9" height="0.9" fill="#c8906e"/><rect x="51.4" y="144.0" width="0.2" height="0.9" fill="#70a060"/><rect x="13.0" y="144.0" width="1.5" height="0.9" fill="#a8d4ee"/><rect x="14.5" y="144.0" width="2.8" height="0.9" fill="#a8d4ee"/><rect x="17.3" y="144.0" width="4.9" height="0.9" fill="#a8d4ee"/><rect x="13.0" y="145.4" width="6.4" height="0.9" fill="#a8d4ee"/><rect x="20.2" y="145.4" width="4.3" height="0.9" fill="#c8c8c8"/><rect x="13.0" y="146.8" width="2.4" height="0.9" fill="#a8d4ee"/><rect x="16.6" y="146.8" width="3.5" height="0.9" fill="#a8d4ee"/><rect x="21.3" y="146.8" width="5.6" height="0.9" fill="#a8d4ee"/><rect x="27.7" y="146.8" width="1.5" height="0.9" fill="#a8d4ee"/><rect x="13.0" y="148.2" width="6.5" height="0.9" fill="#c8c8c8"/><rect x="19.5" y="148.2" width="6.9" height="0.9" fill="#c8c8c8"/><rect x="27.7" y="148.2" width="0.4" height="0.9" fill="#a8d4ee"/><rect x="13.0" y="149.6" width="4.9" height="0.9" fill="#a8d4ee"/><rect x="19.9" y="149.6" width="1.5" height="0.9" fill="#a8d4ee"/><rect x="13.0" y="150.9" width="5.9" height="0.9" fill="#a8d4ee"/><rect x="20.1" y="150.9" width="5.4" height="0.9" fill="#a8d4ee"/><rect x="13.0" y="152.3" width="3.3" height="0.9" fill="#a8d4ee"/><rect x="17.1" y="152.3" width="6.1" height="0.9" fill="#c8c8c8"/><rect x="25.2" y="152.3" width="2.9" height="0.9" fill="#c8c8c8"/><rect x="13.0" y="153.7" width="2.2" height="0.9" fill="#a8d4ee"/><rect x="16.4" y="153.7" width="2.8" height="0.9" fill="#c8c8c8"/><rect x="19.2" y="153.7" width="4.1" height="0.9" fill="#c8c8c8"/><rect x="24.5" y="153.7" width="4.6" height="0.9" fill="#a8d4ee"/><rect x="7.0" y="154.0" width="3.7" height="0.9" fill="#c8c8c8"/><rect x="10.7" y="154.0" width="2.4" height="0.9" fill="#d6d6a0"/><rect x="13.0" y="154.0" width="2.6" height="0.9" fill="#c8906e"/><rect x="15.6" y="154.0" width="3.7" height="0.9" fill="#d6d6a0"/><rect x="21.3" y="154.0" width="2.4" height="0.9" fill="#d6d6a0"/><rect x="25.0" y="154.0" width="3.9" height="0.9" fill="#c8906e"/><rect x="29.7" y="154.0" width="3.7" height="0.9" fill="#a8d4ee"/><rect x="34.1" y="154.0" width="6.9" height="0.9" fill="#a8d4ee"/><rect x="41.8" y="154.0" width="2.8" height="0.9" fill="#c8c8c8"/><rect x="7.0" y="155.4" width="2.1" height="0.9" fill="#c8906e"/><rect x="11.1" y="155.4" width="3.9" height="0.9" fill="#c8c8c8"/><rect x="16.2" y="155.4" width="6.4" height="0.9" fill="#c8906e"/><rect x="23.3" y="155.4" width="3.0" height="0.9" fill="#a8d4ee"/><rect x="27.5" y="155.4" width="3.3" height="0.9" fill="#d6d6a0"/><rect x="32.8" y="155.4" width="2.6" height="0.9" fill="#c8906e"/><rect x="35.4" y="155.4" width="0.1" height="0.9" fill="#d6d6a0"/><rect x="7.0" y="156.8" width="1.5" height="0.9" fill="#c8906e"/><rect x="10.5" y="156.8" width="2.3" height="0.9" fill="#c8c8c8"/><rect x="14.8" y="156.8" width="4.2" height="0.9" fill="#a8d4ee"/><rect x="20.2" y="156.8" width="5.9" height="0.9" fill="#a8d4ee"/><rect x="26.1" y="156.8" width="2.7" height="0.9" fill="#c8906e"/><rect x="30.0" y="156.8" width="2.5" height="0.9" fill="#c8906e"/><rect x="33.3" y="156.8" width="7.0" height="0.9" fill="#a8d4ee"/><rect x="40.3" y="156.8" width="2.5" height="0.9" fill="#d6d6a0"/><rect x="43.5" y="156.8" width="1.9" height="0.9" fill="#d6d6a0"/><rect x="7.0" y="158.2" width="5.6" height="0.9" fill="#c8906e"/><rect x="12.6" y="158.2" width="4.3" height="0.9" fill="#d6d6a0"/><rect x="17.8" y="158.2" width="1.9" height="0.9" fill="#c8906e"/><rect x="19.6" y="158.2" width="5.7" height="0.9" fill="#c8906e"/><rect x="26.1" y="158.2" width="5.9" height="0.9" fill="#a8d4ee"/><rect x="34.0" y="158.2" width="3.2" height="0.9" fill="#d6d6a0"/><rect x="7.0" y="159.6" width="5.4" height="0.9" fill="#c8906e"/><rect x="12.4" y="159.6" width="1.6" height="0.9" fill="#c8c8c8"/><rect x="14.7" y="159.6" width="3.3" height="0.9" fill="#c8906e"/><rect x="19.2" y="159.6" width="6.0" height="0.9" fill="#c8906e"/><rect x="27.2" y="159.6" width="3.4" height="0.9" fill="#c8906e"/><rect x="30.6" y="159.6" width="6.5" height="0.9" fill="#c8906e"/><rect x="37.1" y="159.6" width="2.9" height="0.9" fill="#c8c8c8"/><rect x="7.0" y="160.9" width="5.6" height="0.9" fill="#c8906e"/><rect x="13.4" y="160.9" width="2.5" height="0.9" fill="#d6d6a0"/><rect x="16.7" y="160.9" width="2.3" height="0.9" fill="#c8906e"/><rect x="19.7" y="160.9" width="3.9" height="0.9" fill="#d6d6a0"/><rect x="25.6" y="160.9" width="4.3" height="0.9" fill="#a8d4ee"/><rect x="29.9" y="160.9" width="3.3" height="0.9" fill="#c8c8c8"/><rect x="33.2" y="160.9" width="3.1" height="0.9" fill="#c8906e"/><rect x="7.0" y="162.3" width="2.1" height="0.9" fill="#c8906e"/><rect x="11.1" y="162.3" width="4.1" height="0.9" fill="#c8c8c8"/><rect x="17.2" y="162.3" width="3.7" height="0.9" fill="#c8c8c8"/><rect x="22.1" y="162.3" width="1.9" height="0.9" fill="#a8d4ee"/><rect x="25.2" y="162.3" width="6.3" height="0.9" fill="#c8906e"/><rect x="31.6" y="162.3" width="2.3" height="0.9" fill="#a8d4ee"/><rect x="33.9" y="162.3" width="2.7" height="0.9" fill="#c8906e"/><rect x="38.6" y="162.3" width="6.2" height="0.9" fill="#a8d4ee"/><rect x="44.8" y="162.3" width="2.2" height="0.9" fill="#a8d4ee"/><rect x="7.0" y="163.7" width="3.8" height="0.9" fill="#a8d4ee"/><rect x="11.6" y="163.7" width="3.6" height="0.9" fill="#d6d6a0"/><rect x="15.2" y="163.7" width="4.4" height="0.9" fill="#a8d4ee"/><rect x="21.6" y="163.7" width="3.1" height="0.9" fill="#d6d6a0"/><rect x="24.6" y="163.7" width="6.6" height="0.9" fill="#c8c8c8"/><rect x="33.3" y="163.7" width="3.3" height="0.9" fill="#c8906e"/><rect x="37.8" y="163.7" width="2.5" height="0.9" fill="#a8d4ee"/><rect x="42.3" y="163.7" width="1.8" height="0.9" fill="#c8c8c8"/><rect x="7.0" y="165.1" width="2.5" height="0.9" fill="#c8c8c8"/><rect x="9.5" y="165.1" width="5.9" height="0.9" fill="#c8906e"/><rect x="16.6" y="165.1" width="1.9" height="0.9" fill="#d6d6a0"/><rect x="19.7" y="165.1" width="2.9" height="0.9" fill="#c8906e"/><rect x="24.6" y="165.1" width="2.6" height="0.9" fill="#d6d6a0"/><rect x="29.2" y="165.1" width="2.6" height="0.9" fill="#c8906e"/><rect x="32.6" y="165.1" width="1.7" height="0.9" fill="#a8d4ee"/><rect x="7.0" y="166.5" width="1.9" height="0.9" fill="#a8d4ee"/><rect x="8.9" y="166.5" width="5.7" height="0.9" fill="#d6d6a0"/><rect x="15.4" y="166.5" width="6.0" height="0.9" fill="#c8c8c8"/><rect x="21.4" y="166.5" width="3.3" height="0.9" fill="#c8906e"/><rect x="25.5" y="166.5" width="6.1" height="0.9" fill="#d6d6a0"/><rect x="33.6" y="166.5" width="2.5" height="0.9" fill="#a8d4ee"/><rect x="36.1" y="166.5" width="6.2" height="0.9" fill="#a8d4ee"/><rect x="44.3" y="166.5" width="1.9" height="0.9" fill="#c8c8c8"/><rect x="47.4" y="166.5" width="2.1" height="0.9" fill="#c8c8c8"/><rect x="7.0" y="167.9" width="6.0" height="0.9" fill="#c8906e"/><rect x="14.2" y="167.9" width="5.1" height="0.9" fill="#c8c8c8"/><rect x="20.1" y="167.9" width="2.5" height="0.9" fill="#c8c8c8"/><rect x="23.4" y="167.9" width="5.3" height="0.9" fill="#a8d4ee"/><rect x="28.7" y="167.9" width="2.2" height="0.9" fill="#d6d6a0"/><rect x="32.1" y="167.9" width="6.7" height="0.9" fill="#c8906e"/><rect x="7.0" y="169.3" width="7.0" height="0.9" fill="#c8c8c8"/><rect x="15.2" y="169.3" width="6.3" height="0.9" fill="#a8d4ee"/><rect x="22.3" y="169.3" width="2.3" height="0.9" fill="#c8906e"/><rect x="26.6" y="169.3" width="3.6" height="0.9" fill="#a8d4ee"/><rect x="31.3" y="169.3" width="4.0" height="0.9" fill="#d6d6a0"/><rect x="35.3" y="169.3" width="0.6" height="0.9" fill="#a8d4ee"/><rect x="7.0" y="170.7" width="2.1" height="0.9" fill="#d6d6a0"/><rect x="10.3" y="170.7" width="6.7" height="0.9" fill="#d6d6a0"/><rect x="19.1" y="170.7" width="2.7" height="0.9" fill="#a8d4ee"/><rect x="23.8" y="170.7" width="2.6" height="0.9" fill="#a8d4ee"/><rect x="27.2" y="170.7" width="4.0" height="0.9" fill="#d6d6a0"/><rect x="32.4" y="170.7" width="3.8" height="0.9" fill="#c8906e"/><rect x="38.2" y="170.7" width="3.7" height="0.9" fill="#c8906e"/><rect x="7.0" y="172.1" width="1.6" height="0.9" fill="#c8c8c8"/><rect x="8.6" y="172.1" width="3.8" height="0.9" fill="#c8c8c8"/><rect x="13.5" y="172.1" width="3.6" height="0.9" fill="#c8906e"/><rect x="18.4" y="172.1" width="2.1" height="0.9" fill="#d6d6a0"/><rect x="20.4" y="172.1" width="4.0" height="0.9" fill="#c8c8c8"/><rect x="24.4" y="172.1" width="5.8" height="0.9" fill="#d6d6a0"/><rect x="31.5" y="172.1" width="1.7" height="0.9" fill="#c8906e"/><rect x="33.1" y="172.1" width="5.2" height="0.9" fill="#c8c8c8"/><rect x="40.3" y="172.1" width="1.9" height="0.9" fill="#c8c8c8"/><rect x="44.2" y="172.1" width="1.0" height="0.9" fill="#a8d4ee"/><rect x="7.0" y="173.5" width="6.9" height="0.9" fill="#a8d4ee"/><rect x="15.9" y="173.5" width="6.1" height="0.9" fill="#d6d6a0"/><rect x="21.9" y="173.5" width="1.9" height="0.9" fill="#a8d4ee"/><rect x="25.8" y="173.5" width="5.8" height="0.9" fill="#c8c8c8"/><rect x="32.4" y="173.5" width="4.2" height="0.9" fill="#c8c8c8"/><rect x="38.7" y="173.5" width="2.0" height="0.9" fill="#d6d6a0"/><rect x="40.7" y="173.5" width="2.4" height="0.9" fill="#c8906e"/><rect x="45.1" y="173.5" width="5.8" height="0.9" fill="#d6d6a0"/><rect x="7.0" y="174.8" width="1.6" height="0.9" fill="#c8906e"/><rect x="8.6" y="174.8" width="2.1" height="0.9" fill="#a8d4ee"/><rect x="10.7" y="174.8" width="5.8" height="0.9" fill="#d6d6a0"/><rect x="17.7" y="174.8" width="7.0" height="0.9" fill="#d6d6a0"/><rect x="24.6" y="174.8" width="4.6" height="0.9" fill="#c8c8c8"/><rect x="29.3" y="174.8" width="4.3" height="0.9" fill="#c8906e"/><rect x="34.8" y="174.8" width="3.4" height="0.9" fill="#c8c8c8"/><rect x="39.0" y="174.8" width="2.4" height="0.9" fill="#a8d4ee"/><rect x="7.0" y="176.2" width="4.7" height="0.9" fill="#c8c8c8"/><rect x="11.7" y="176.2" width="4.0" height="0.9" fill="#d6d6a0"/><rect x="16.6" y="176.2" width="2.3" height="0.9" fill="#c8c8c8"/><rect x="20.9" y="176.2" width="4.9" height="0.9" fill="#d6d6a0"/><rect x="27.8" y="176.2" width="6.0" height="0.9" fill="#c8c8c8"/><rect x="34.6" y="176.2" width="5.9" height="0.9" fill="#d6d6a0"/><rect x="42.5" y="176.2" width="2.4" height="0.9" fill="#d6d6a0"/><rect x="46.8" y="176.2" width="2.1" height="0.9" fill="#c8906e"/><rect x="48.9" y="176.2" width="2.9" height="0.9" fill="#c8906e"/><rect x="7.0" y="177.6" width="4.5" height="0.9" fill="#a8d4ee"/><rect x="12.7" y="177.6" width="6.4" height="0.9" fill="#c8c8c8"/><rect x="19.9" y="177.6" width="4.6" height="0.9" fill="#d6d6a0"/><rect x="26.5" y="177.6" width="4.9" height="0.9" fill="#c8906e"/><rect x="32.6" y="177.6" width="2.7" height="0.9" fill="#d6d6a0"/><rect x="7.0" y="179.0" width="3.6" height="0.9" fill="#a8d4ee"/><rect x="11.8" y="179.0" width="4.0" height="0.9" fill="#d6d6a0"/><rect x="17.0" y="179.0" width="6.1" height="0.9" fill="#d6d6a0"/><rect x="23.9" y="179.0" width="4.4" height="0.9" fill="#c8906e"/><rect x="30.3" y="179.0" width="6.0" height="0.9" fill="#d6d6a0"/><rect x="37.5" y="179.0" width="1.7" height="0.9" fill="#c8906e"/><rect x="41.2" y="179.0" width="6.7" height="0.9" fill="#a8d4ee"/><rect x="7.0" y="180.4" width="4.8" height="0.9" fill="#d6d6a0"/><rect x="11.8" y="180.4" width="5.3" height="0.9" fill="#c8906e"/><rect x="17.8" y="180.4" width="3.5" height="0.9" fill="#c8906e"/><rect x="22.6" y="180.4" width="2.7" height="0.9" fill="#d6d6a0"/><rect x="26.4" y="180.4" width="2.5" height="0.9" fill="#d6d6a0"/><rect x="30.1" y="180.4" width="1.8" height="0.9" fill="#d6d6a0"/><rect x="32.7" y="180.4" width="2.9" height="0.9" fill="#c8906e"/><rect x="37.6" y="180.4" width="1.9" height="0.9" fill="#c8906e"/><rect x="7.0" y="181.8" width="4.6" height="0.9" fill="#d6d6a0"/><rect x="11.6" y="181.8" width="3.7" height="0.9" fill="#c8c8c8"/><rect x="16.5" y="181.8" width="3.3" height="0.9" fill="#c8906e"/><rect x="20.6" y="181.8" width="6.0" height="0.9" fill="#c8906e"/><rect x="27.8" y="181.8" width="1.8" height="0.9" fill="#a8d4ee"/><rect x="29.7" y="181.8" width="3.7" height="0.9" fill="#d6d6a0"/><rect x="7.0" y="183.2" width="5.0" height="0.9" fill="#d6d6a0"/><rect x="12.8" y="183.2" width="4.7" height="0.9" fill="#d6d6a0"/><rect x="19.5" y="183.2" width="3.8" height="0.9" fill="#d6d6a0"/><rect x="24.1" y="183.2" width="5.8" height="0.9" fill="#a8d4ee"/><rect x="30.7" y="183.2" width="3.6" height="0.9" fill="#a8d4ee"/><rect x="36.3" y="183.2" width="5.9" height="0.9" fill="#a8d4ee"/><rect x="43.4" y="183.2" width="6.4" height="0.9" fill="#d6d6a0"/><rect x="49.8" y="183.2" width="0.7" height="0.9" fill="#c8906e"/><rect x="7.0" y="184.6" width="3.7" height="0.9" fill="#d6d6a0"/><rect x="11.5" y="184.6" width="2.0" height="0.9" fill="#c8906e"/><rect x="14.3" y="184.6" width="6.1" height="0.9" fill="#d6d6a0"/><rect x="21.2" y="184.6" width="6.3" height="0.9" fill="#a8d4ee"/><rect x="29.5" y="184.6" width="1.7" height="0.9" fill="#a8d4ee"/><rect x="33.2" y="184.6" width="2.6" height="0.9" fill="#a8d4ee"/><rect x="37.8" y="184.6" width="3.9" height="0.9" fill="#a8d4ee"/><rect x="43.7" y="184.6" width="2.1" height="0.9" fill="#c8c8c8"/><rect x="7.0" y="186.0" width="3.4" height="0.9" fill="#c8c8c8"/><rect x="11.6" y="186.0" width="3.6" height="0.9" fill="#a8d4ee"/><rect x="17.2" y="186.0" width="4.7" height="0.9" fill="#a8d4ee"/><rect x="23.0" y="186.0" width="5.7" height="0.9" fill="#c8c8c8"/><rect x="30.8" y="186.0" width="5.3" height="0.9" fill="#a8d4ee"/><rect x="7.0" y="187.4" width="4.2" height="0.9" fill="#c8906e"/><rect x="12.4" y="187.4" width="5.5" height="0.9" fill="#d6d6a0"/><rect x="19.1" y="187.4" width="6.6" height="0.9" fill="#c8906e"/><rect x="27.7" y="187.4" width="2.8" height="0.9" fill="#c8c8c8"/><rect x="32.5" y="187.4" width="1.3" height="0.9" fill="#d6d6a0"/><rect x="7.0" y="188.7" width="6.5" height="0.9" fill="#a8d4ee"/><rect x="15.5" y="188.7" width="4.2" height="0.9" fill="#c8c8c8"/><rect x="20.5" y="188.7" width="5.6" height="0.9" fill="#d6d6a0"/><rect x="27.3" y="188.7" width="4.3" height="0.9" fill="#c8c8c8"/><rect x="31.6" y="188.7" width="7.0" height="0.9" fill="#c8906e"/><rect x="39.3" y="188.7" width="4.5" height="0.9" fill="#c8906e"/><rect x="45.9" y="188.7" width="2.3" height="0.9" fill="#c8906e"/><rect x="49.4" y="188.7" width="2.0" height="0.9" fill="#c8c8c8"/><rect x="7.0" y="191.8" width="5.0" height="0.9" fill="#6aa9d8"/><rect x="13.0" y="191.8" width="17.3" height="0.9" fill="#d6d6a0"/><rect x="31.3" y="191.8" width="11.2" height="0.9" fill="#c8906e"/><rect x="7.0" y="193.2" width="7.0" height="0.9" fill="#6aa9d8"/><rect x="15.0" y="193.2" width="17.0" height="0.9" fill="#d6d6a0"/><rect x="32.9" y="193.2" width="10.6" height="0.9" fill="#c8906e"/><rect x="7.0" y="194.6" width="6.4" height="0.9" fill="#6aa9d8"/><rect x="14.4" y="194.6" width="21.1" height="0.9" fill="#d6d6a0"/><rect x="36.5" y="194.6" width="9.4" height="0.9" fill="#c8906e"/><rect x="7.0" y="195.9" width="6.9" height="0.9" fill="#6aa9d8"/><rect x="14.9" y="195.9" width="14.9" height="0.9" fill="#d6d6a0"/><rect x="30.9" y="195.9" width="13.0" height="0.9" fill="#c8906e"/><rect x="7.0" y="197.3" width="6.7" height="0.9" fill="#6aa9d8"/><rect x="14.7" y="197.3" width="19.7" height="0.9" fill="#d6d6a0"/><rect x="35.3" y="197.3" width="7.9" height="0.9" fill="#c8906e"/><rect x="7.0" y="198.7" width="4.8" height="0.9" fill="#6aa9d8"/><rect x="12.8" y="198.7" width="16.8" height="0.9" fill="#d6d6a0"/><rect x="30.6" y="198.7" width="10.6" height="0.9" fill="#c8906e"/><rect x="7.0" y="200.1" width="6.8" height="0.9" fill="#6aa9d8"/><rect x="14.8" y="200.1" width="15.4" height="0.9" fill="#d6d6a0"/><rect x="31.2" y="200.1" width="12.9" height="0.9" fill="#c8906e"/><rect x="7.0" y="201.5" width="5.6" height="0.9" fill="#6aa9d8"/><rect x="13.6" y="201.5" width="16.4" height="0.9" fill="#d6d6a0"/><rect x="31.0" y="201.5" width="10.7" height="0.9" fill="#c8906e"/><rect x="7.0" y="202.9" width="4.5" height="0.9" fill="#6aa9d8"/><rect x="12.5" y="202.9" width="22.5" height="0.9" fill="#d6d6a0"/><rect x="36.0" y="202.9" width="10.6" height="0.9" fill="#c8906e"/><rect x="10.0" y="204.0" width="3.2" height="0.9" fill="#a8d4ee"/><rect x="14.4" y="204.0" width="5.1" height="0.9" fill="#c8c8c8"/><rect x="21.5" y="204.0" width="4.0" height="0.9" fill="#a8d4ee"/><rect x="10.0" y="208.2" width="3.4" height="0.9" fill="#c8c8c8"/><rect x="13.4" y="208.2" width="6.7" height="0.9" fill="#c8c8c8"/><rect x="20.1" y="208.2" width="3.2" height="0.9" fill="#c8c8c8"/><rect x="23.3" y="208.2" width="1.5" height="0.9" fill="#c8c8c8"/><rect x="7.0" y="210.9" width="18.0" height="0.9" fill="#6aa9d8"/><rect x="26.0" y="210.9" width="50.2" height="0.9" fill="#707070"/><rect x="7.0" y="212.3" width="18.0" height="0.9" fill="#6aa9d8"/><rect x="26.0" y="212.3" width="45.7" height="0.9" fill="#707070"/><rect x="7.0" y="213.7" width="18.0" height="0.9" fill="#6aa9d8"/><rect x="26.0" y="213.7" width="31.7" height="0.9" fill="#707070"/><rect x="10.0" y="215.1" width="5.3" height="0.9" fill="#c8c8c8"/><rect x="17.3" y="215.1" width="4.4" height="0.9" fill="#c8c8c8"/><rect x="21.7" y="215.1" width="4.4" height="0.9" fill="#a8d4ee"/><rect x="28.1" y="215.1" width="1.7" height="0.9" fill="#c8c8c8"/><rect x="7.0" y="216.5" width="18.0" height="0.9" fill="#6aa9d8"/><rect x="26.0" y="216.5" width="35.2" height="0.9" fill="#707070"/><rect x="10.0" y="217.9" width="6.7" height="0.9" fill="#c8c8c8"/><rect x="17.5" y="217.9" width="0.9" height="0.9" fill="#a8d4ee"/><rect x="7.0" y="219.3" width="18.0" height="0.9" fill="#6aa9d8"/><rect x="26.0" y="219.3" width="37.0" height="0.9" fill="#707070"/><rect x="7.0" y="220.7" width="18.0" height="0.9" fill="#6aa9d8"/><rect x="26.0" y="220.7" width="42.9" height="0.9" fill="#707070"/><rect x="10.0" y="222.0" width="15.0" height="0.9" fill="#c8c8c8"/><rect x="26.0" y="222.0" width="26.0" height="0.9" fill="#707070"/><rect x="13.0" y="223.4" width="10.0" height="0.9" fill="#a8d4ee"/><rect x="13.0" y="224.8" width="10.0" height="0.9" fill="#a8d4ee"/><rect x="13.0" y="226.2" width="24.0" height="0.9" fill="#c8c8c8"/><rect x="10.0" y="230.3" width="15.0" height="0.9" fill="#c8c8c8"/><rect x="26.0" y="230.3" width="26.0" height="0.9" fill="#707070"/><rect x="13.0" y="231.7" width="10.0" height="0.9" fill="#a8d4ee"/><rect x="13.0" y="233.1" width="10.0" height="0.9" fill="#a8d4ee"/><rect x="13.0" y="234.5" width="24.0" height="0.9" fill="#c8c8c8"/><rect x="10.0" y="238.7" width="15.0" height="0.9" fill="#c8c8c8"/><rect x="26.0" y="238.7" width="26.0" height="0.9" fill="#707070"/><rect x="13.0" y="240.1" width="10.0" height="0.9" fill="#a8d4ee"/><rect x="13.0" y="241.5" width="10.0" height="0.9" fill="#a8d4ee"/><rect x="13.0" y="242.8" width="24.0" height="0.9" fill="#c8c8c8"/><rect x="10.0" y="247.0" width="15.0" height="0.9" fill="#c8c8c8"/><rect x="26.0" y="247.0" width="26.0" height="0.9" fill="#707070"/><rect x="13.0" y="248.4" width="10.0" height="0.9" fill="#a8d4ee"/><rect x="13.0" y="249.8" width="10.0" height="0.9" fill="#a8d4ee"/><rect x="13.0" y="251.2" width="24.0" height="0.9" fill="#c8c8c8"/><rect x="10.0" y="255.4" width="15.0" height="0.9" fill="#c8c8c8"/><rect x="26.0" y="255.4" width="26.0" height="0.9" fill="#707070"/><rect x="13.0" y="256.7" width="10.0" height="0.9" fill="#a8d4ee"/><rect x="13.0" y="258.1" width="10.0" height="0.9" fill="#a8d4ee"/><rect x="13.0" y="259.5" width="24.0" height="0.9" fill="#c8c8c8"/><rect x="10.0" y="263.7" width="15.0" height="0.9" fill="#c8c8c8"/><rect x="26.0" y="263.7" width="26.0" height="0.9" fill="#707070"/><rect x="13.0" y="265.1" width="10.0" height="0.9" fill="#a8d4ee"/><rect x="13.0" y="266.5" width="10.0" height="0.9" fill="#a8d4ee"/><rect x="13.0" y="267.9" width="24.0" height="0.9" fill="#c8c8c8"/><rect x="10.0" y="272.0" width="15.0" height="0.9" fill="#c8c8c8"/><rect x="26.0" y="272.0" width="26.0" height="0.9" fill="#707070"/><rect x="13.0" y="273.4" width="10.0" height="0.9" fill="#a8d4ee"/><rect x="13.0" y="274.8" width="10.0" height="0.9" fill="#a8d4ee"/><rect x="13.0" y="276.2" width="24.0" height="0.9" fill="#c8c8c8"/><rect x="10.0" y="280.4" width="15.0" height="0.9" fill="#c8c8c8"/><rect x="26.0" y="280.4" width="26.0" height="0.9" fill="#707070"/><rect x="13.0" y="281.8" width="10.0" height="0.9" fill="#a8d4ee"/><rect x="13.0" y="283.2" width="10.0" height="0.9" fill="#a8d4ee"/><rect x="13.0" y="284.5" width="24.0" height="0.9" fill="#c8c8c8"/><rect x="10.0" y="288.7" width="15.0" height="0.9" fill="#c8c8c8"/><rect x="26.0" y="288.7" width="26.0" height="0.9" fill="#707070"/><rect x="13.0" y="290.1" width="10.0" height="0.9" fill="#a8d4ee"/><rect x="13.0" y="291.5" width="10.0" height="0.9" fill="#a8d4ee"/><rect x="13.0" y="292.9" width="24.0" height="0.9" fill="#c8c8c8"/><rect x="10.0" y="297.0" width="4.8" height="0.9" fill="#a8d4ee"/><rect x="16.0" y="297.0" width="6.6" height="0.9" fill="#c8c8c8"/><rect x="23.5" y="297.0" width="6.8" height="0.9" fill="#c8c8c8"/><rect x="30.3" y="297.0" width="2.1" height="0.9" fill="#a8d4ee"/><rect x="32.4" y="297.0" width="3.8" height="0.9" fill="#c8c8c8"/><rect x="37.0" y="297.0" width="5.3" height="0.9" fill="#a8d4ee"/><rect x="42.2" y="297.0" width="1.5" height="0.9" fill="#c8c8c8"/><rect x="44.5" y="297.0" width="0.2" height="0.9" fill="#c8c8c8"/><rect x="10.0" y="298.4" width="6.4" height="0.9" fill="#c8c8c8"/><rect x="17.6" y="298.4" width="1.8" height="0.9" fill="#a8d4ee"/><rect x="20.6" y="298.4" width="4.4" height="0.9" fill="#a8d4ee"/><rect x="27.0" y="298.4" width="5.1" height="0.9" fill="#a8d4ee"/><rect x="32.9" y="298.4" width="0.1" height="0.9" fill="#c8c8c8"/><rect x="10.0" y="299.8" width="2.5" height="0.9" fill="#a8d4ee"/><rect x="13.7" y="299.8" width="4.8" height="0.9" fill="#a8d4ee"/><rect x="19.7" y="299.8" width="4.7" height="0.9" fill="#c8c8c8"/><rect x="25.1" y="299.8" width="3.2" height="0.9" fill="#c8c8c8"/><rect x="29.6" y="299.8" width="4.3" height="0.9" fill="#a8d4ee"/><rect x="34.7" y="299.8" width="5.2" height="0.9" fill="#c8c8c8"/><rect x="39.9" y="299.8" width="1.9" height="0.9" fill="#a8d4ee"/><rect x="42.6" y="299.8" width="0.4" height="0.9" fill="#c8c8c8"/><rect x="10.0" y="301.2" width="1.9" height="0.9" fill="#c8c8c8"/><rect x="13.9" y="301.2" width="7.0" height="0.9" fill="#a8d4ee"/><rect x="21.7" y="301.2" width="3.4" height="0.9" fill="#c8c8c8"/><rect x="27.0" y="301.2" width="6.5" height="0.9" fill="#a8d4ee"/><rect x="10.0" y="302.6" width="3.6" height="0.9" fill="#c8c8c8"/><rect x="15.6" y="302.6" width="6.5" height="0.9" fill="#c8c8c8"/><rect x="22.1" y="302.6" width="2.6" height="0.9" fill="#a8d4ee"/><rect x="25.6" y="302.6" width="0.6" height="0.9" fill="#a8d4ee"/><rect x="13.0" y="305.3" width="2.6" height="0.9" fill="#c8c8c8"/><rect x="16.4" y="305.3" width="6.4" height="0.9" fill="#a8d4ee"/><rect x="24.7" y="305.3" width="3.5" height="0.9" fill="#a8d4ee"/><rect x="28.2" y="305.3" width="6.6" height="0.9" fill="#c8c8c8"/><rect x="34.8" y="305.3" width="0.5" height="0.9" fill="#a8d4ee"/><rect x="10.0" y="306.7" width="4.7" height="0.9" fill="#a8d4ee"/><rect x="16.7" y="306.7" width="5.7" height="0.9" fill="#a8d4ee"/><rect x="23.6" y="306.7" width="6.7" height="0.9" fill="#c8c8c8"/><rect x="31.1" y="306.7" width="1.0" height="0.9" fill="#a8d4ee"/><rect x="13.0" y="308.1" width="3.1" height="0.9" fill="#a8d4ee"/><rect x="18.1" y="308.1" width="3.4" height="0.9" fill="#a8d4ee"/><rect x="23.5" y="308.1" width="1.7" height="0.9" fill="#c8c8c8"/><rect x="27.3" y="308.1" width="6.9" height="0.9" fill="#c8c8c8"/><rect x="36.1" y="308.1" width="5.7" height="0.9" fill="#a8d4ee"/><rect x="41.8" y="308.1" width="0.8" height="0.9" fill="#c8c8c8"/><rect x="10.0" y="309.5" width="2.7" height="0.9" fill="#a8d4ee"/><rect x="12.7" y="309.5" width="4.1" height="0.9" fill="#c8c8c8"/><rect x="18.0" y="309.5" width="1.6" height="0.9" fill="#a8d4ee"/><rect x="19.6" y="309.5" width="3.4" height="0.9" fill="#a8d4ee"/><rect x="24.1" y="309.5" width="5.3" height="0.9" fill="#a8d4ee"/><rect x="30.6" y="309.5" width="2.4" height="0.9" fill="#c8c8c8"/><rect x="35.0" y="309.5" width="3.9" height="0.9" fill="#a8d4ee"/><rect x="40.9" y="309.5" width="2.9" height="0.9" fill="#a8d4ee"/><rect x="44.6" y="309.5" width="2.5" height="0.9" fill="#a8d4ee"/><rect x="13.0" y="310.9" width="5.7" height="0.9" fill="#a8d4ee"/><rect x="19.9" y="310.9" width="2.8" height="0.9" fill="#a8d4ee"/><rect x="24.7" y="310.9" width="2.4" height="0.9" fill="#a8d4ee"/><rect x="28.3" y="310.9" width="5.0" height="0.9" fill="#a8d4ee"/><rect x="33.3" y="310.9" width="3.4" height="0.9" fill="#a8d4ee"/><rect x="36.7" y="310.9" width="4.2" height="0.9" fill="#a8d4ee"/><rect x="42.9" y="310.9" width="5.3" height="0.9" fill="#a8d4ee"/><rect x="50.2" y="310.9" width="0.4" height="0.9" fill="#a8d4ee"/><rect x="13.0" y="312.3" width="1.8" height="0.9" fill="#c8c8c8"/><rect x="14.8" y="312.3" width="3.0" height="0.9" fill="#a8d4ee"/><rect x="17.9" y="312.3" width="2.0" height="0.9" fill="#c8c8c8"/><rect x="20.6" y="312.3" width="4.7" height="0.9" fill="#a8d4ee"/><rect x="25.4" y="312.3" width="2.9" height="0.9" fill="#a8d4ee"/><rect x="28.3" y="312.3" width="3.8" height="0.9" fill="#a8d4ee"/><rect x="32.1" y="312.3" width="6.7" height="0.9" fill="#a8d4ee"/><rect x="40.4" y="312.3" width="15.0" height="0.9" fill="#707070"/><rect x="13.0" y="313.7" width="6.6" height="0.9" fill="#a8d4ee"/><rect x="20.4" y="313.7" width="5.3" height="0.9" fill="#a8d4ee"/><rect x="26.9" y="313.7" width="6.9" height="0.9" fill="#c8c8c8"/><rect x="34.6" y="313.7" width="5.9" height="0.9" fill="#a8d4ee"/><rect x="41.7" y="313.7" width="5.7" height="0.9" fill="#c8c8c8"/><rect x="13.0" y="315.1" width="6.6" height="0.9" fill="#c8c8c8"/><rect x="20.8" y="315.1" width="4.1" height="0.9" fill="#a8d4ee"/><rect x="26.8" y="315.1" width="6.6" height="0.9" fill="#a8d4ee"/><rect x="33.5" y="315.1" width="6.9" height="0.9" fill="#c8c8c8"/><rect x="40.3" y="315.1" width="2.9" height="0.9" fill="#a8d4ee"/><rect x="7.0" y="318.5" width="2.5" height="0.9" fill="#c8c8c8"/><rect x="10.7" y="318.5" width="6.9" height="0.9" fill="#c8c8c8"/><rect x="18.4" y="318.5" width="3.7" height="0.9" fill="#c8c8c8"/><rect x="7.0" y="319.9" width="3.7" height="0.9" fill="#6aa9d8"/><rect x="10.7" y="319.9" width="4.6" height="0.9" fill="#6aa9d8"/><rect x="17.4" y="319.9" width="2.7" height="0.9" fill="#c8c8c8"/><rect x="21.3" y="319.9" width="1.7" height="0.9" fill="#a8d4ee"/><rect x="7.0" y="321.3" width="2.8" height="0.9" fill="#c8c8c8"/><rect x="9.8" y="321.3" width="5.3" height="0.9" fill="#c8c8c8"/><rect x="17.1" y="321.3" width="3.2" height="0.9" fill="#6aa9d8"/><rect x="21.1" y="321.3" width="1.6" height="0.9" fill="#6aa9d8"/><rect x="22.8" y="321.3" width="3.3" height="0.9" fill="#a8d4ee"/><rect x="26.1" y="321.3" width="0.9" height="0.9" fill="#c8c8c8"/><rect x="7.0" y="322.7" width="5.8" height="0.9" fill="#6aa9d8"/><rect x="12.8" y="322.7" width="3.0" height="0.9" fill="#c8c8c8"/><rect x="17.8" y="322.7" width="1.9" height="0.9" fill="#a8d4ee"/><rect x="19.7" y="322.7" width="4.1" height="0.9" fill="#c8c8c8"/><rect x="24.6" y="322.7" width="3.1" height="0.9" fill="#c8c8c8"/><rect x="7.0" y="324.1" width="3.3" height="0.9" fill="#a8d4ee"/><rect x="11.5" y="324.1" width="1.8" height="0.9" fill="#6aa9d8"/><rect x="14.5" y="324.1" width="4.4" height="0.9" fill="#c8c8c8"/><rect x="20.9" y="324.1" width="0.5" height="0.9" fill="#a8d4ee"/><rect x="7.0" y="325.4" width="1.9" height="0.9" fill="#6aa9d8"/><rect x="10.9" y="325.4" width="4.1" height="0.9" fill="#6aa9d8"/><rect x="16.3" y="325.4" width="4.7" height="0.9" fill="#6aa9d8"/><rect x="21.0" y="325.4" width="4.4" height="0.9" fill="#a8d4ee"/><rect x="26.2" y="325.4" width="2.0" height="0.9" fill="#a8d4ee"/><rect x="7.0" y="326.8" width="6.8" height="0.9" fill="#c8c8c8"/><rect x="15.0" y="326.8" width="3.0" height="0.9" fill="#c8c8c8"/><rect x="18.0" y="326.8" width="2.8" height="0.9" fill="#6aa9d8"/></g></svg>
<div id="sticky"><div class="ln" style="top:20.20px"><i class="kw">const</i> <i class="fn">profile</i> <i class="op">=</i> <i class="kw">async</i> <b style="color:#f2d433">(</b><i class="var">req</i><i class="op">,</i> <i class="var">res</i><i class="op">,</i> <i class="var">next</i><b style="color:#f2d433">)</b> <i class="kw">=&gt;</i> <b style="color:#f2d433">{</b></div><div class="lnum" style="top:20.20px">77</div><div class="ln" style="top:32.71px">  <i class="kw">const</i> <i class="fn">getTrendingSponsor</i> <i class="op">=</i> <b style="color:#ca7bc7">(</b><i class="var">callback</i><b style="color:#ca7bc7">)</b> <i class="kw">=&gt;</i> <b style="color:#ca7bc7">{</b></div><div class="lnum" style="top:32.71px">102</div></div>
<div id="bc"><span style="left:-7px">controllers</span><svg style="position:absolute;left:41.2px;top:6.9px" width="5" height="8" viewBox="0 0 5 8"><path d="M1 1 L3.8 4 L1 7" fill="none" stroke="#b8b8b8" stroke-width="0.9"/></svg><span style="left:50.6px;top:5.3px;color:#cfcf45;font-size:9px;letter-spacing:-0.2px;-webkit-text-stroke:0.15px #cfcf45">JS</span><span style="left:63.5px">authController.js</span><svg style="position:absolute;left:136.5px;top:6.9px" width="5" height="8" viewBox="0 0 5 8"><path d="M1 1 L3.8 4 L1 7" fill="none" stroke="#b8b8b8" stroke-width="0.9"/></svg><span style="left:143.8px">...</span></div>
<div id="tstrip"></div>
<div id="find">
<div class="sash"></div>
<svg style="position:absolute;left:5.6px;top:6.6px" width="6" height="9" viewBox="0 0 6 9"><path d="M1.2 1 L4.6 4.5 L1.2 8" fill="none" stroke="#c5c5c5" stroke-width="1"/></svg>
<div class="inp"></div>
<div style="position:absolute;left:19.6px;top:5.5px;font-size:10px;color:#d6d6d6;line-height:12px;-webkit-text-stroke:0.2px #d6d6d6">/profile</div>
<div style="position:absolute;left:118.6px;top:6.3px;font-size:8.2px;color:#c0c0c0;line-height:10px;-webkit-text-stroke:0.15px #c0c0c0">Aa</div>
<div style="position:absolute;left:133.3px;top:5.6px;font-size:8.4px;color:#c8c8c8;line-height:10px;letter-spacing:-0.2px;-webkit-text-stroke:0.25px #c8c8c8">ab</div>
<div style="position:absolute;left:132.5px;top:14.3px;width:11px;height:1px;background:#c0c0c0"></div>
<div style="position:absolute;left:147.4px;top:4.4px;width:15.3px;height:14.5px;background:#23497a;border:1px solid #3670ad;border-radius:2px"></div>
<svg style="position:absolute;left:147.4px;top:4.4px" width="16" height="15" viewBox="0 0 16 15"><circle cx="4" cy="10.4" r="1.45" fill="#e6f0fa"/><path d="M8.8 2.2 V8.4 M6.1 3.75 L11.5 6.85 M6.1 6.85 L11.5 3.75" stroke="#e6f0fa" stroke-width="1.15"/></svg>
<div style="position:absolute;left:166px;top:6.6px;font-size:8.7px;color:#d6d6d6;line-height:11px;-webkit-text-stroke:0.25px #d6d6d6">? of 1</div>
<svg style="position:absolute;left:224.8px;top:5.5px" width="70" height="11" viewBox="0 0 70 11">
 <path d="M3.85 1.8 V9.2 M0.6 5 L3.85 1.6 L7.1 5" fill="none" stroke="#c8c8c8" stroke-width="1.1"/>
 <path d="M21.45 1.5 V9 M18.2 5.8 L21.45 9.2 L24.7 5.8" fill="none" stroke="#c8c8c8" stroke-width="1.1"/>
 <path d="M33.8 3.1 H41.4 M33.6 5.8 H43.7 M33.8 8.6 H40.4" fill="none" stroke="#c8c8c8" stroke-width="1.25"/>
 <path d="M52.2 3.2 L58.2 9.1 M58.2 3.2 L52.2 9.1" fill="none" stroke="#c8c8c8" stroke-width="1.1"/>
</svg>
</div>
<div id="sb">
 <div style="position:absolute;left:0;top:0;width:11px;height:480px;background:#1e1e1e"></div>
 <div style="position:absolute;left:0.5px;top:37px;width:5px;height:362.5px;background:#1d5080"></div>
 <div style="position:absolute;left:0;top:78.2px;width:11px;height:67px;background:rgba(121,121,121,0.35)"></div>
 <div style="position:absolute;left:5.5px;top:29.2px;width:3px;height:6px;background:#b07a3a"></div>
 <div style="position:absolute;left:0.5px;top:359px;width:5px;height:3px;background:#c0507a"></div>
 <div style="position:absolute;left:0;top:399.5px;width:11px;height:1px;background:#c8c8c8"></div>
 <div style="position:absolute;left:0.5px;top:400.5px;width:5px;height:2px;background:#4a8a4a"></div>
</div>
<div id="bot"></div>
</div>
</body></html>
